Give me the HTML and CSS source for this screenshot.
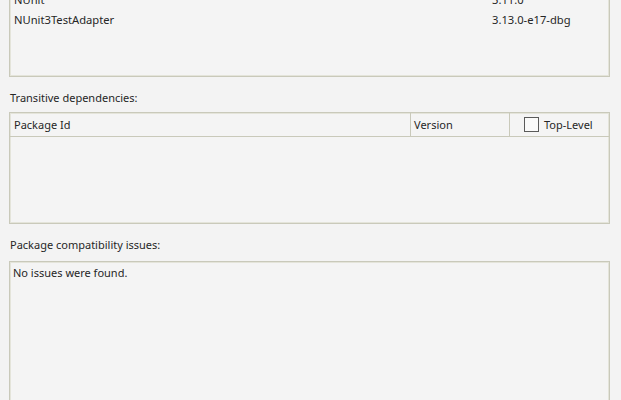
FILE: index.html
```html
<!DOCTYPE html>
<html>
<head>
<meta charset="utf-8">
<link rel="stylesheet" href="styles.css">
</head>
<body>
<div class="page">
  <div class="box top-box">
    <div class="pkg-row"><span>NUnit</span><span>3.11.0</span></div>
    <div class="pkg-row"><span>NUnit3TestAdapter</span><span>3.13.0-e17-dbg</span></div>
  </div>

  <div class="label label-trans">Transitive dependencies:</div>
  <div class="box table">
    <div class="thead">
      <div class="th th-id">Package Id</div>
      <div class="th th-ver">Version</div>
      <div class="th th-top"><span class="checkbox"></span><span>Top-Level</span></div>
    </div>
    <div class="tbody"></div>
  </div>

  <div class="label label-compat">Package compatibility issues:</div>
  <div class="box issues">No issues were found.</div>
</div>
</body>
</html>
```

FILE: styles.css
```css
html, body {
  margin: 0;
  padding: 0;
  background: #f3f3f3;
  overflow: hidden;
}

body {
  font-family: "Noto Sans", "Open Sans", sans-serif;
  font-size: 11px;
  color: #262626;
}

.page {
  padding: 0 11px 0 9px;
}

.box {
  border: 1px solid #c9c9ba;
  box-shadow: inset 0 0 0 1px #e4e4da;
  background: #f4f4f4;
}

.top-box {
  margin-top: -14px;
  height: 91px;
  box-sizing: border-box;
  padding: 3px 0 0 4px;
}

.pkg-row {
  display: grid;
  grid-template-columns: 478px 1fr;
  height: 20px;
  line-height: 20px;
  font-size: 11.2px;
}

.label {
  line-height: 16px;
  padding-left: 1px;
  padding-top: 13px;
}

.label-trans {
  margin-bottom: 6px;
}

.label-compat {
  margin-bottom: 8px;
}

.table {
  height: 112px;
  box-sizing: border-box;
  display: flex;
  flex-direction: column;
}

.thead {
  display: grid;
  grid-template-columns: 400px 99px 1fr;
  height: 24px;
  box-sizing: border-box;
  border-bottom: 1px solid #c9c9ba;
}

.th {
  line-height: 23px;
  white-space: nowrap;
}

.th-id {
  padding-left: 4px;
}

.th-ver {
  border-left: 1px solid #c9c9ba;
  padding-left: 3px;
}

.th-top {
  border-left: 1px solid #c9c9ba;
  padding-left: 14px;
  display: flex;
  align-items: center;
  gap: 5px;
}

.checkbox {
  display: block;
  width: 15px;
  height: 15px;
  box-sizing: border-box;
  border: 1px solid #5a5a5a;
  background: #fafafa;
}

.tbody {
  flex: 1;
}

.issues {
  height: 220px;
  box-sizing: border-box;
  padding: 3px 0 0 3px;
  line-height: 16px;
}
```
